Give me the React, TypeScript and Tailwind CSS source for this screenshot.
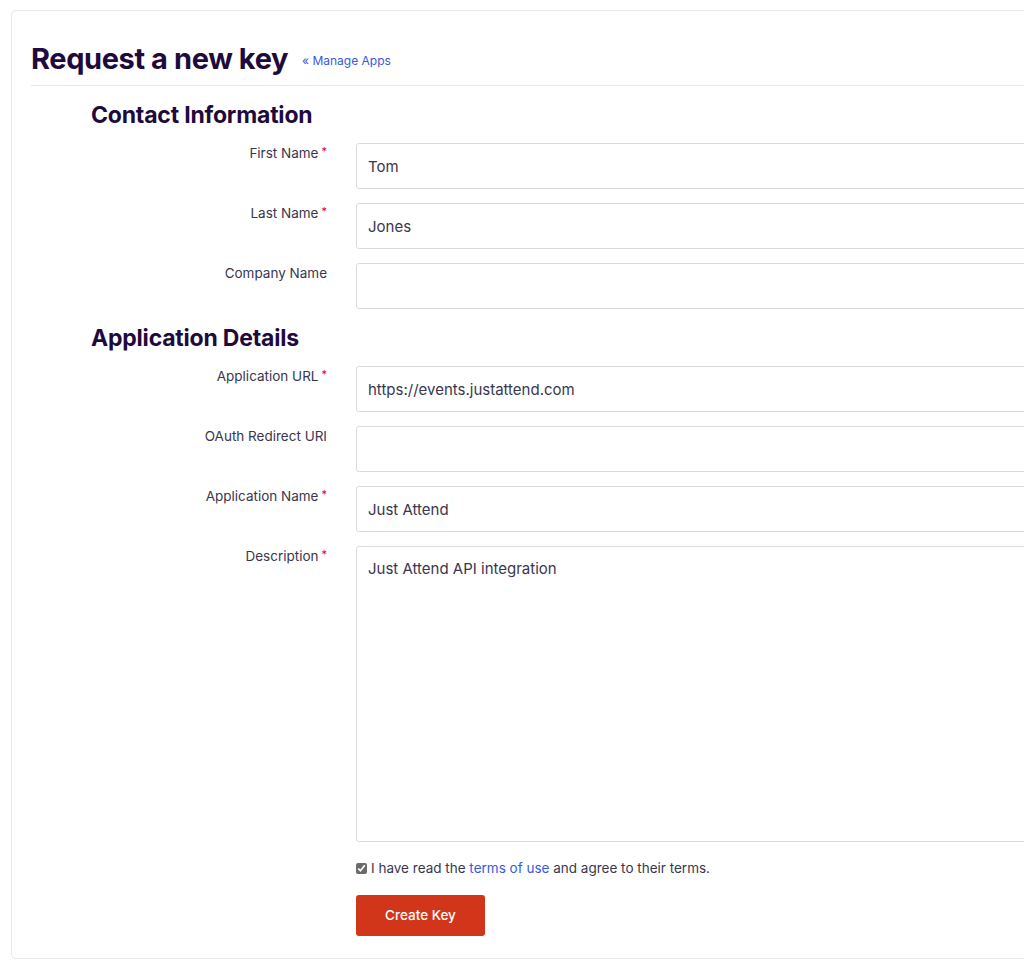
import React, { useState } from 'react';

const font = { fontFamily: 'Inter, "Noto Sans", sans-serif' };

interface FieldProps {
  label: string;
  required?: boolean;
  value: string;
  multiline?: boolean;
}

const Field: React.FC<FieldProps> = ({ label, required, value, multiline }) => (
  <div className="flex mb-[14px]">
    <label className="w-[237px] shrink-0 text-right pt-0 pr-[1px] text-[13.5px] text-[#39364f] leading-[20px]">
      {label}
      {required && <span className="text-[#d6001c] text-[11px] align-top ml-[3px] relative top-[-2px]">*</span>}
    </label>
    <div className="ml-[28px] flex-1">
      {multiline ? (
        <textarea
          defaultValue={value}
          className="w-full h-[296px] border border-[#dbdae3] rounded-[3px] px-[11px] py-[12px] text-[15px] text-[#39364f] leading-[20px] resize-none outline-none"
        />
      ) : (
        <input
          defaultValue={value}
          className="w-full h-[46px] border border-[#dbdae3] rounded-[3px] px-[11px] text-[15px] text-[#39364f] outline-none"
        />
      )}
    </div>
  </div>
);

const App: React.FC = () => {
  const [agreed, setAgreed] = useState(true);

  return (
    <div className="w-[1024px] h-[961px] overflow-hidden bg-white" style={font}>
      <div className="ml-[11px] mt-[10px] w-[1040px] h-[949px] border border-[#e6e6e6] rounded-[5px] pl-[19px]">
        <div className="flex items-end pt-[30px] pb-[8px] border-b border-[#e6e6e6]">
          <h1 className="text-[29px] font-bold text-[#1e0a3c] leading-[36px] tracking-[-0.4px]">Request a new key</h1>
          <a href="#" className="ml-[14px] mb-[7px] text-[12px] text-[#3659e3]">« Manage Apps</a>
        </div>

        <div className="pl-[60px]">
          <h2 className="text-[23px] font-bold text-[#1e0a3c] leading-[28px] mt-[15px] mb-[14px] tracking-[-0.2px]">Contact Information</h2>
          <Field label="First Name" required value="Tom" />
          <Field label="Last Name" required value="Jones" />
          <Field label="Company Name" value="" />

          <h2 className="text-[23px] font-bold text-[#1e0a3c] leading-[28px] mt-[15px] mb-[14px] tracking-[-0.2px]">Application Details</h2>
          <Field label="Application URL" required value="https://events.justattend.com" />
          <Field label="OAuth Redirect URI" value="" />
          <Field label="Application Name" required value="Just Attend" />
          <Field label="Description" required value="Just Attend API integration" multiline />

          <div className="ml-[265px] mt-[-4px]">
            <label className="flex items-center text-[13.5px] text-[#39364f] leading-[20px]">
              <input
                type="checkbox"
                checked={agreed}
                onChange={(e) => setAgreed(e.target.checked)}
                className="w-[11px] h-[11px] mr-[4px] accent-[#6b6b6b]"
              />
              I have read the&nbsp;<a href="#" className="text-[#3659e3]">terms of use</a>&nbsp;and agree to their terms.
            </label>
            <button
              type="button"
              className="mt-[17px] w-[129px] h-[41px] bg-[#d1351a] text-white text-[13.5px] font-medium rounded-[3px]"
            >
              Create Key
            </button>
          </div>
        </div>
      </div>
    </div>
  );
};

export default App;
